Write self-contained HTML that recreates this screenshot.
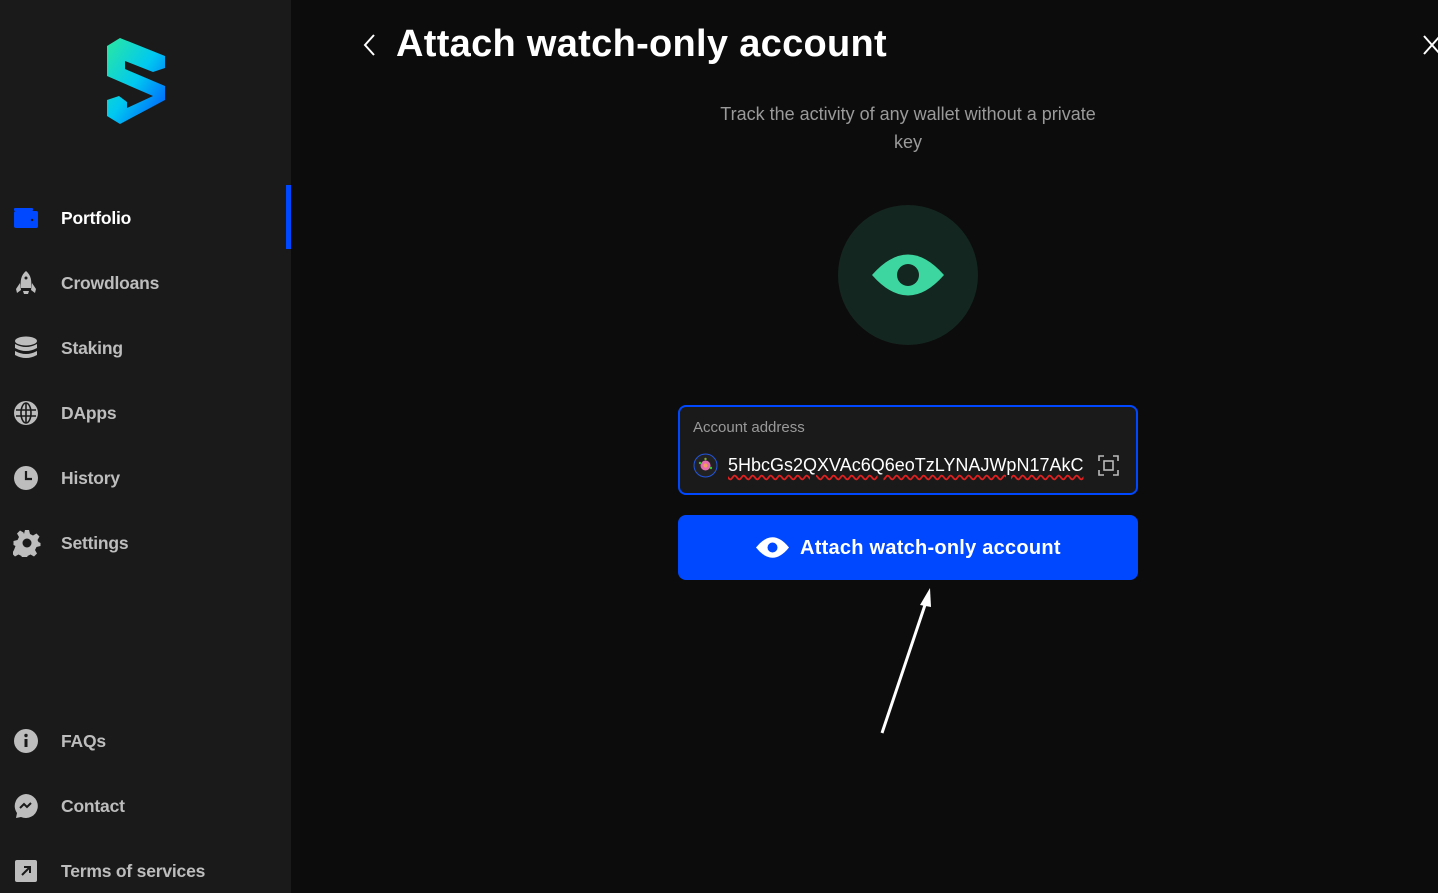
<!DOCTYPE html>
<html><head><meta charset="utf-8"><style>
*{margin:0;padding:0;box-sizing:border-box}
body{width:1438px;height:893px;background:#0c0c0c;font-family:"Liberation Sans",sans-serif;overflow:hidden;position:relative;color:#fff}
.side{position:absolute;left:0;top:0;width:291px;height:893px;background:#1a1a1a}
.item{position:absolute;left:0;height:40px;display:flex;align-items:center;font-size:17.5px;color:#bdbdbd;font-weight:bold}
.item svg{position:absolute;left:13px}
.item span{position:absolute;left:61px;white-space:nowrap;letter-spacing:-0.2px}
.bar{position:absolute;left:286px;top:185px;width:5px;height:64px;background:#0048ff}
</style></head><body>
<div class="side">
<svg style="position:absolute;left:105px;top:38px" width="62" height="88" viewBox="0 0 62 88">
<defs><linearGradient id="g" x1="0" y1="0" x2="1" y2="1"><stop offset="0" stop-color="#2be8a0"/><stop offset=".5" stop-color="#00c8f0"/><stop offset="1" stop-color="#0050ff"/></linearGradient></defs>
<path d="M2 8 L15 0 L60 18 L60 30 L48 34 L20 23 L20 31 L60 48 L60 62 L15 86 L2 78 L2 62 L14 58 L22 64 L22 70 L48 58 L2 38 Z" fill="url(#g)"/>
</svg>
<div class="bar"></div>
<div class="item" style="top:198px;color:#fff"><svg width="26" height="22" viewBox="0 0 26 22"><rect x="1" y="4" width="24" height="17" rx="2" fill="#0048ff"/><rect x="1" y="1" width="19" height="3" rx="1" fill="#0048ff"/><circle cx="19" cy="13" r="1.2" fill="#1a1a1a"/></svg><span>Portfolio</span></div>
<div class="item" style="top:263px"><svg width="26" height="26" viewBox="0 0 26 26"><path d="M13 1 C8 5 7 11 8 18 L18 18 C19 11 18 5 13 1Z M7 13 L3 19 L4 23 L8 20Z M19 13 L23 19 L22 23 L18 20Z M10 21 L16 21 L15 24 L11 24Z" fill="#bdbdbd"/><circle cx="13" cy="8" r="1.5" fill="#1a1a1a"/></svg><span>Crowdloans</span></div>
<div class="item" style="top:328px"><svg width="26" height="26" viewBox="0 0 26 26"><ellipse cx="13" cy="6" rx="11" ry="4.5" fill="#bdbdbd"/><path d="M2 9 Q13 15 24 9 L24 13 Q13 19 2 13Z M2 16 Q13 22 24 16 L24 20 Q13 26 2 20Z" fill="#bdbdbd"/></svg><span>Staking</span></div>
<div class="item" style="top:393px"><svg width="26" height="26" viewBox="0 0 26 26"><circle cx="13" cy="13" r="12" fill="#bdbdbd"/><g stroke="#1a1a1a" stroke-width="1.6" fill="none"><ellipse cx="13" cy="13" rx="5" ry="10"/><path d="M3 10H23M3 16H23M13 3V23"/></g></svg><span>DApps</span></div>
<div class="item" style="top:458px"><svg width="26" height="26" viewBox="0 0 26 26"><circle cx="13" cy="13" r="12" fill="#bdbdbd"/><path d="M13 6V14H19" stroke="#1a1a1a" stroke-width="2.2" fill="none"/></svg><span>History</span></div>
<div class="item" style="top:523px"><svg width="28" height="28" viewBox="0 0 28 28"><path d="M12 1h4l1 4 3 1.5 3.5-2 3 3-2 3.5L25.5 13l2 1v0l0 0v0-1 4l-4 1-1.5 3 2 3.5-3 3-3.5-2-3 1.5-1 4h-4l-1-4-3-1.5-3.5 2-3-3 2-3.5L2.5 17l-2-1v-4l4-1 1.5-3-2-3.5 3-3 3.5 2L11 5z" fill="#bdbdbd"/><circle cx="14" cy="14" r="4.5" fill="#1a1a1a"/></svg><span>Settings</span></div>
<div class="item" style="top:721px"><svg width="26" height="26" viewBox="0 0 26 26"><circle cx="13" cy="13" r="12" fill="#bdbdbd"/><rect x="11.5" y="11" width="3" height="8" fill="#1a1a1a"/><circle cx="13" cy="7.5" r="1.7" fill="#1a1a1a"/></svg><span>FAQs</span></div>
<div class="item" style="top:786px"><svg width="26" height="26" viewBox="0 0 26 26"><path d="M13 1a12 12 0 1 1-5 23l-5 1 1-5A12 12 0 0 1 13 1z" fill="#bdbdbd"/><path d="M7 15l4-4 3 3 4-4" stroke="#1a1a1a" stroke-width="2" fill="none"/></svg><span>Contact</span></div>
<div class="item" style="top:851px"><svg width="26" height="26" viewBox="0 0 26 26"><rect x="2" y="2" width="22" height="22" rx="2" fill="#bdbdbd"/><path d="M9 17L17 9M11 9H17V15" stroke="#1a1a1a" stroke-width="2" fill="none"/></svg><span>Terms of services</span></div>
</div>

<svg style="position:absolute;left:362px;top:33px" width="16" height="24" viewBox="0 0 16 24"><path d="M12 2L3 12L12 22" stroke="#fff" stroke-width="2" fill="none"/></svg>
<div style="position:absolute;left:396px;top:23px;font-size:38px;font-weight:bold;letter-spacing:0.3px;white-space:nowrap">Attach watch-only account</div>
<svg style="position:absolute;left:1422px;top:34px" width="20" height="22" viewBox="0 0 20 22"><path d="M2 2L18 20M18 2L2 20" stroke="#fff" stroke-width="2"/></svg>
<div style="position:absolute;left:708px;top:100px;width:400px;text-align:center;font-size:18px;line-height:28px;color:#9a9a9a">Track the activity of any wallet without a private key</div>
<div style="position:absolute;left:838px;top:205px;width:140px;height:140px;border-radius:50%;background:#142620"></div>
<svg style="position:absolute;left:870px;top:250px" width="76" height="50" viewBox="0 0 76 50"><path d="M2 25Q38 -16 74 25Q38 66 2 25Z" fill="#3ed6a0"/><circle cx="38" cy="25" r="11" fill="#142620"/></svg>
<div style="position:absolute;left:678px;top:405px;width:460px;height:90px;border:2px solid #0048ff;border-radius:8px;background:#1a1a1a"></div>
<div style="position:absolute;left:693px;top:419px;font-size:15px;color:#9a9a9a">Account address</div>
<svg style="position:absolute;left:693px;top:453px" width="25" height="25" viewBox="0 0 25 25"><circle cx="12.5" cy="12.5" r="11.5" fill="#222" stroke="#2255dd" stroke-width="1"/><circle cx="12.5" cy="12.5" r="5" fill="#e46ab0"/><circle cx="12.5" cy="12.5" r="2" fill="#f0a060"/><circle cx="7" cy="10" r="1.2" fill="#3c3"/><circle cx="18" cy="15" r="1.2" fill="#3c3"/><circle cx="12.5" cy="6" r="1.2" fill="#8a3"/></svg>
<div style="position:absolute;left:728px;top:455px;font-size:18px;color:#fff;text-decoration:underline wavy #e02020;text-underline-offset:3px">5HbcGs2QXVAc6Q6eoTzLYNAJWpN17AkC</div>
<svg style="position:absolute;left:1098px;top:455px" width="21" height="21" viewBox="0 0 21 21"><path d="M1 6V1H6M15 1H20V6M20 15V20H15M6 20H1V15" stroke="#bbb" stroke-width="1.6" fill="none"/><rect x="6" y="6" width="9" height="9" stroke="#bbb" stroke-width="1.6" fill="none"/></svg>
<div style="position:absolute;left:678px;top:515px;width:460px;height:65px;border-radius:8px;background:#0048ff"></div>
<svg style="position:absolute;left:755px;top:535px" width="35" height="25" viewBox="0 0 35 25"><path d="M1 12.5Q17.5 -8 34 12.5Q17.5 33 1 12.5Z" fill="#fff"/><circle cx="17.5" cy="12.5" r="5" fill="#0048ff"/></svg>
<div style="position:absolute;left:800px;top:537px;font-size:20px;font-weight:bold;letter-spacing:0.25px;white-space:nowrap">Attach watch-only account</div>
<svg style="position:absolute;left:875px;top:585px" width="60" height="155" viewBox="0 0 60 155"><path d="M7 148L52 14" stroke="#fff" stroke-width="3"/><path d="M55 3L45 20L56 22Z" fill="#fff"/></svg>
</body></html>
